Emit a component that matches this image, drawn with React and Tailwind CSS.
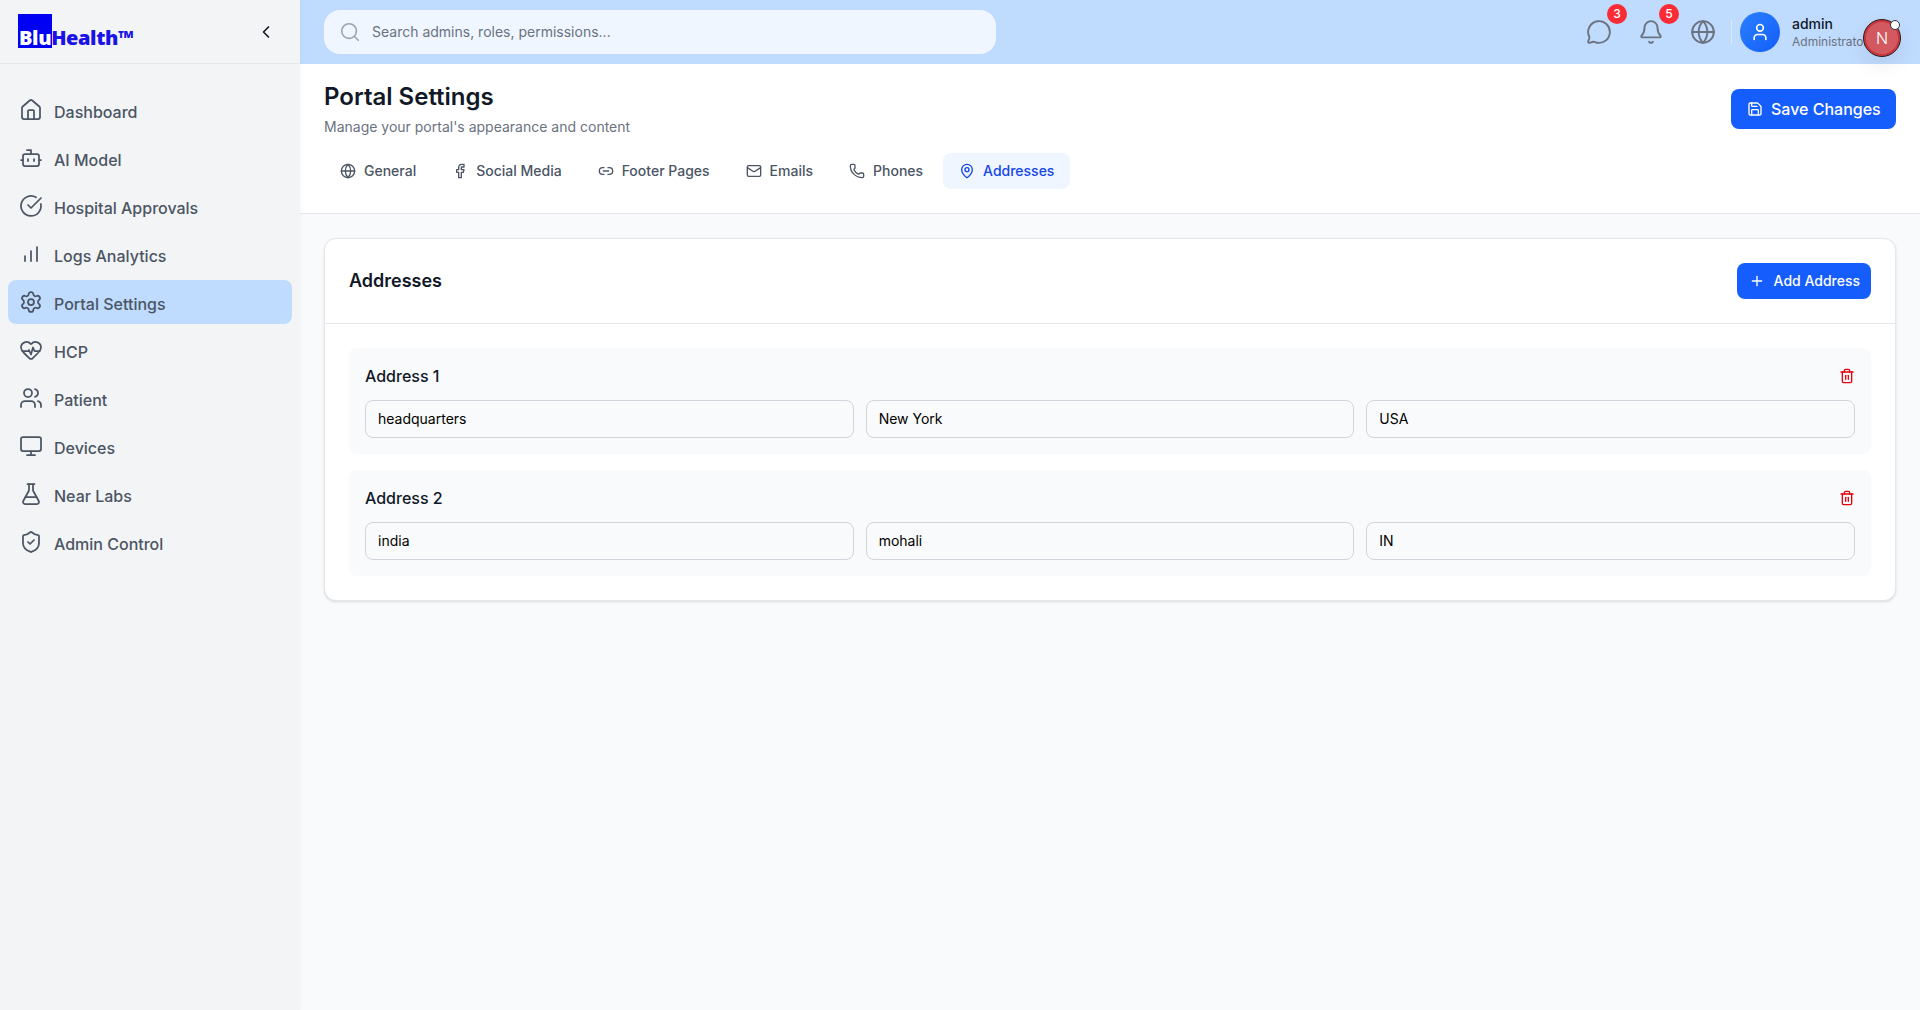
import {
    Bell,
    Bot,
    ChevronLeft,
    CircleCheckBig,
    Facebook,
    FlaskConical,
    Globe,
    HeartPulse,
    House,
    Link2,
    Mail,
    MapPin,
    MessageCircle,
    Monitor,
    Phone,
    Plus,
    Save,
    Search,
    Settings,
    ShieldCheck,
    Trash2,
    User,
    Users,
} from "lucide-react";

const LogsIcon = ({ className }) => (
    <svg
        viewBox="0 0 24 24"
        fill="none"
        stroke="currentColor"
        strokeWidth="1.75"
        strokeLinecap="round"
        className={className}
    >
        <path d="M6 19v-5" />
        <path d="M12 19V9" />
        <path d="M18 19V5" />
    </svg>
);

const navItems = [
    { label: "Dashboard", icon: House },
    { label: "AI Model", icon: Bot },
    { label: "Hospital Approvals", icon: CircleCheckBig },
    { label: "Logs Analytics", icon: LogsIcon },
    { label: "Portal Settings", icon: Settings, active: true },
    { label: "HCP", icon: HeartPulse },
    { label: "Patient", icon: Users },
    { label: "Devices", icon: Monitor },
    { label: "Near Labs", icon: FlaskConical },
    { label: "Admin Control", icon: ShieldCheck },
];

const tabs = [
    { label: "General", icon: Globe },
    { label: "Social Media", icon: Facebook },
    { label: "Footer Pages", icon: Link2 },
    { label: "Emails", icon: Mail },
    { label: "Phones", icon: Phone },
    { label: "Addresses", icon: MapPin, active: true },
];

const addresses = [
    { title: "Address 1", fields: ["headquarters", "New York", "USA"] },
    { title: "Address 2", fields: ["india", "mohali", "IN"] },
];

const Sidebar = () => (
    <aside className="w-[300px] shrink-0 h-full bg-[#f3f4f6] shadow-[1px_0_4px_rgba(0,0,0,0.03)] z-10">
        <div className="h-16 flex items-center justify-between pl-[18px] pr-6 border-b border-[#e5e7eb]">
            <div className="relative w-[116px] h-[34px] mb-[1px]">
                <div className="absolute left-0 top-0 w-[34px] h-[34px] bg-[#0000f5]" />
                <div className="absolute left-[1px] bottom-[-4px] font-['Open_Sans'] font-extrabold text-[20px] leading-[28px] tracking-[-0.4px] text-[#1a12e6] whitespace-nowrap">
                    <span className="text-white">Blu</span>Health™
                </div>
            </div>
            <ChevronLeft className="size-5 text-[#111827]" />
        </div>
        <nav className="flex flex-col gap-1 px-2 pt-6">
            {navItems.map((item) => (
                <div
                    key={item.label}
                    className={`h-11 flex items-center gap-[11px] pl-[11px] rounded-lg text-base font-medium text-[#4b5563] ${
                        item.active ? "bg-[#bfdbfe]" : ""
                    }`}
                >
                    <item.icon className="size-6" strokeWidth={1.75} />
                    <span className="mt-1">{item.label}</span>
                </div>
            ))}
        </nav>
    </aside>
);

const Header = () => (
    <header className="h-16 shrink-0 bg-[#bfdbfe] flex items-center justify-between pl-6 pr-[19px] relative">
        <div className="w-[672px] h-11 rounded-2xl bg-[#eff6ff] flex items-center gap-[11px] pl-[15px]">
            <Search className="size-[22px] text-[#9ca3af]" strokeWidth={1.75} />
            <span className="text-sm text-[#6b7280]">Search admins, roles, permissions...</span>
        </div>
        <div className="flex items-center">
            <div className="relative size-[26px] mr-[26px]">
                <MessageCircle className="size-[26px] text-[#6b7280]" strokeWidth={1.75} />
                <span className="absolute -top-[15px] left-[21px] size-5 rounded-full bg-[#fb2c36] text-white text-xs font-medium flex items-center justify-center">
                    3
                </span>
            </div>
            <div className="relative size-[26px] mr-[26px]">
                <Bell className="size-[26px] text-[#6b7280]" strokeWidth={1.75} />
                <span className="absolute -top-[15px] left-[21px] size-5 rounded-full bg-[#fb2c36] text-white text-xs font-medium flex items-center justify-center">
                    5
                </span>
            </div>
            <Globe className="size-[26px] text-[#6b7280] mr-[15px]" strokeWidth={1.75} />
            <div className="w-px h-6 bg-[#dbeafe] mr-2" />
            <div className="size-10 rounded-full bg-gradient-to-br from-[#2b7fff] to-[#155dfc] flex items-center justify-center">
                <User className="size-5 text-white" />
            </div>
            <div className="ml-3 w-[109px]">
                <div className="text-sm font-medium leading-5 text-[#111827]">admin</div>
                <div className="text-xs leading-4 text-[#6b7280]">Administrator</div>
            </div>
        </div>
        {/* dev indicator floating over the user block */}
        <div className="absolute right-[19px] top-[19px] size-[38px] rounded-full bg-[#d2595f] border border-[#2a1a1a] ring-2 ring-inset ring-[#c8363c] flex items-center justify-center text-white text-base font-light shadow-[0_8px_20px_rgba(0,0,0,0.08)]">
            N
            <span className="absolute top-0 right-0 size-[10px] rounded-full bg-white border border-[#333]" />
        </div>
    </header>
);

const PageTop = () => (
    <section className="bg-white border-b border-[#e5e7eb] h-[150px] shrink-0 px-6 pt-[17px]">
        <div className="flex items-start justify-between">
            <div>
                <h1 className="text-2xl font-semibold text-[#111827]">Portal Settings</h1>
                <p className="text-sm text-[#6b7280] mt-1">Manage your portal's appearance and content</p>
            </div>
            <button className="h-10 w-[165px] mt-2 pl-4 rounded-lg bg-[#155dfc] text-white font-medium flex items-center gap-2">
                <Save className="size-4" />
                Save Changes
            </button>
        </div>
        <div className="flex gap-1 mt-4">
            {tabs.map((tab) => (
                <div
                    key={tab.label}
                    className={`h-9 px-4 rounded-lg flex items-center gap-2 text-sm font-medium ${
                        tab.active ? "bg-[#eff6ff] text-[#1447e6]" : "text-[#4b5563]"
                    }`}
                >
                    <tab.icon className="size-4" />
                    {tab.label}
                </div>
            ))}
        </div>
    </section>
);

const AddressesCard = () => (
    <div className="bg-white rounded-xl border border-[#e5e7eb] shadow-sm">
        <div className="flex items-center justify-between p-6 border-b border-[#e5e7eb]">
            <h2 className="text-lg font-semibold text-[#111827]">Addresses</h2>
            <button className="h-9 pl-3 pr-[11px] rounded-lg bg-[#155dfc] text-white text-sm font-medium flex items-center gap-[9px]">
                <Plus className="size-4" />
                Add Address
            </button>
        </div>
        <div className="p-6 flex flex-col gap-4">
            {addresses.map((address) => (
                <div key={address.title} className="bg-[#f9fafb] rounded-lg p-4">
                    <div className="flex items-center justify-between mb-3">
                        <h3 className="font-medium text-[#111827]">{address.title}</h3>
                        <Trash2 className="size-4 text-[#e7000b]" />
                    </div>
                    <div className="grid grid-cols-3 gap-3">
                        {address.fields.map((value) => (
                            <input
                                key={value}
                                defaultValue={value}
                                className="h-[38px] px-3 pb-[1px] rounded-lg border border-[#d1d5db] text-sm text-black"
                            />
                        ))}
                    </div>
                </div>
            ))}
        </div>
    </div>
);

const App = () => {
    return (
        <div className="flex h-screen overflow-hidden bg-[#f9fafb] font-['Inter',sans-serif]">
            <Sidebar />
            <main className="flex-1 min-w-0 flex flex-col">
                <Header />
                <PageTop />
                <div className="px-6 pt-6">
                    <AddressesCard />
                </div>
            </main>
        </div>
    );
};

export default App;
